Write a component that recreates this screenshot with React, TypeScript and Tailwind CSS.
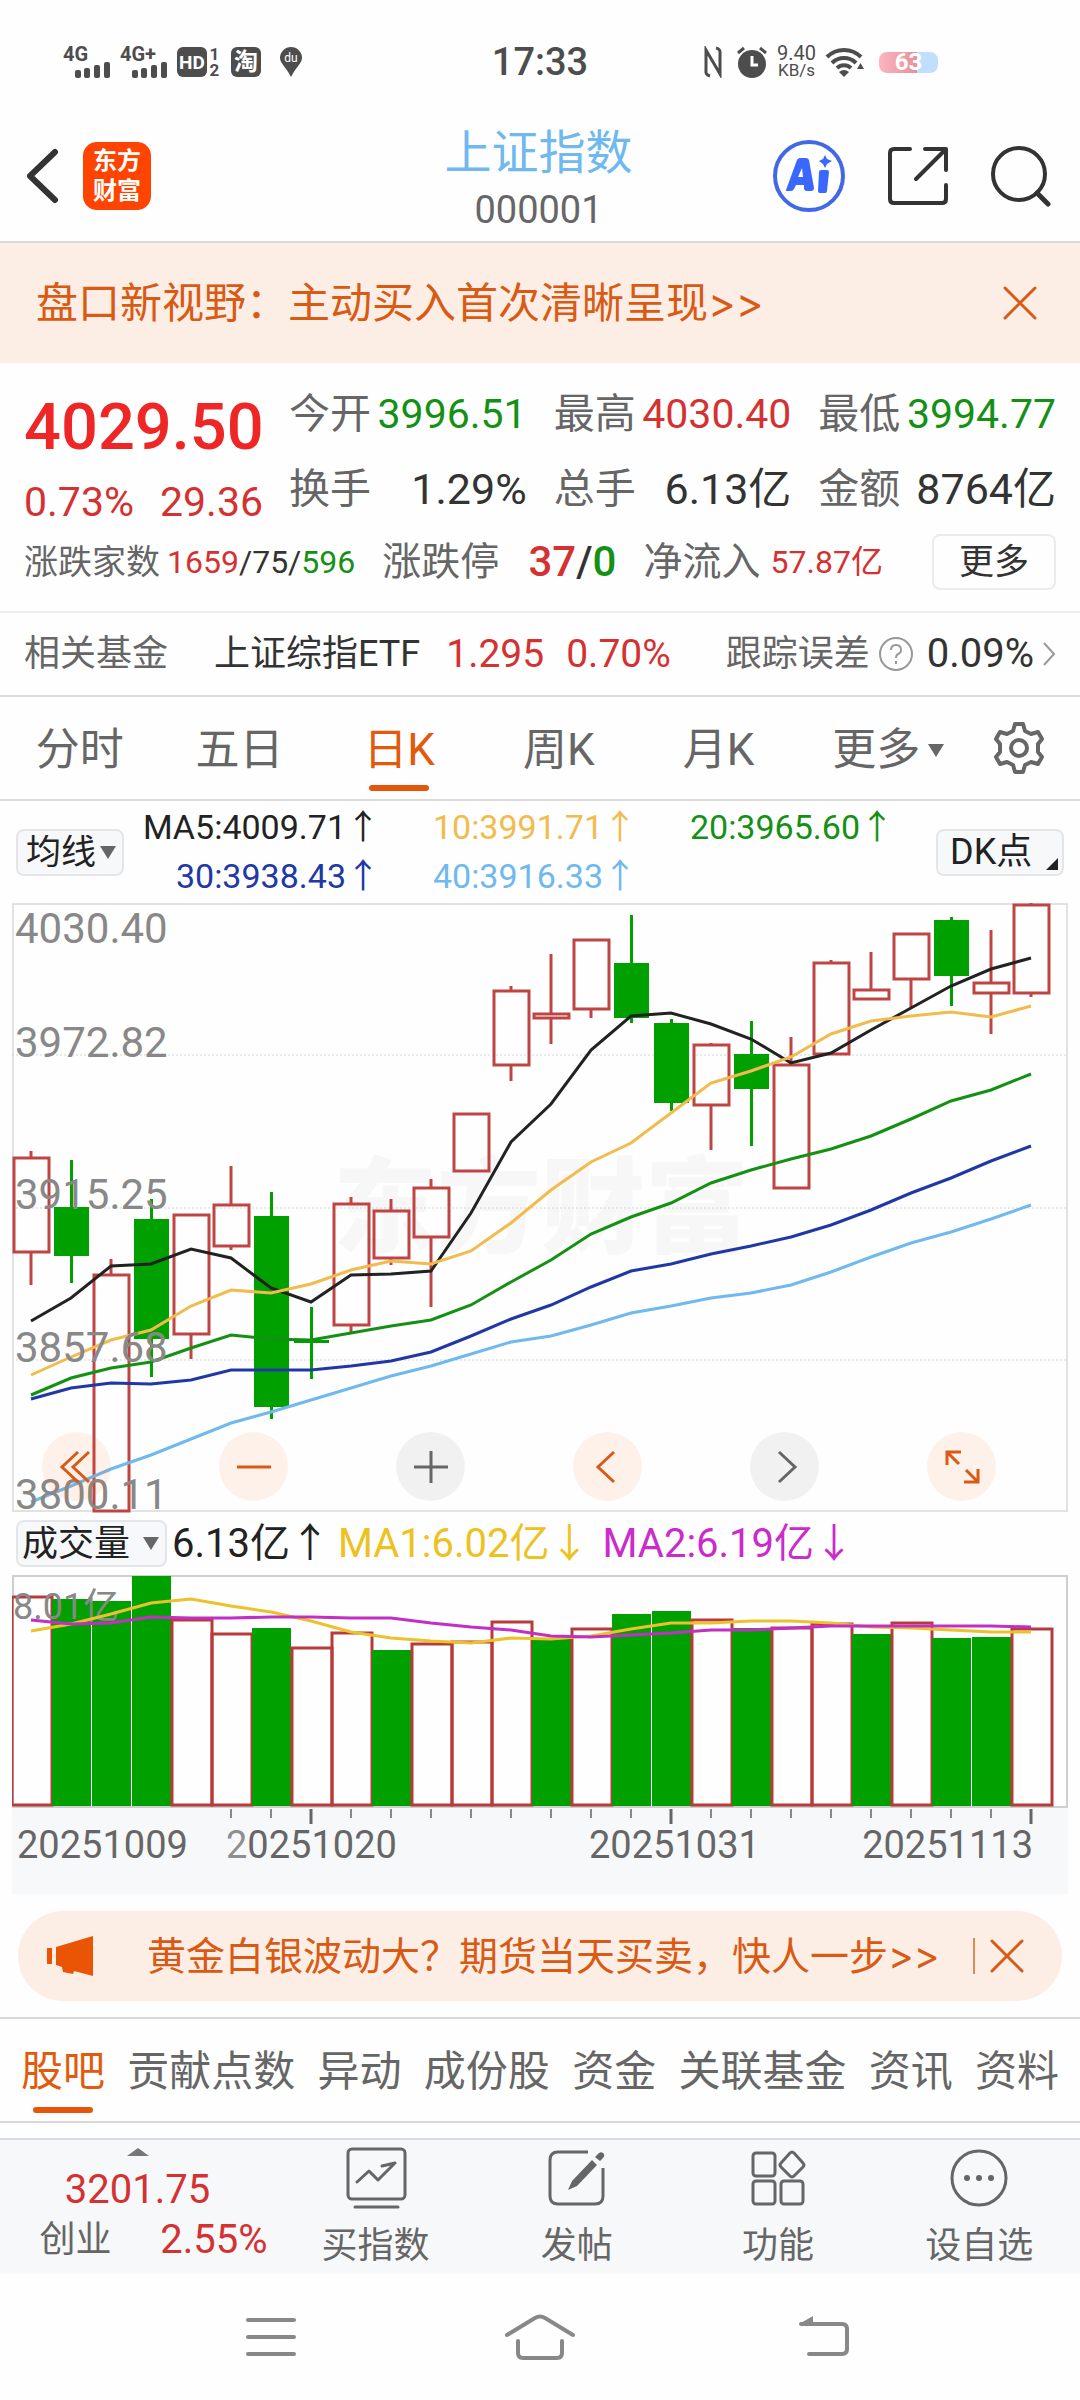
import { useState } from "react";
import type { ReactNode } from "react";

type Candle = [high: number, top: number, bottom: number, low: number, up: boolean];

const CANDLES: Candle[] = [
  [248, 255, 349, 382, true],
  [257, 304, 353, 380, false],
  [356, 372, 608, 608, true],
  [296, 316, 436, 474, false],
  [312, 312, 431, 456, true],
  [263, 302, 343, 347, true],
  [289, 313, 504, 516, false],
  [404, 437, 440, 476, false],
  [294, 301, 422, 429, true],
  [296, 308, 355, 362, true],
  [276, 285, 334, 404, true],
  [211, 211, 268, 268, true],
  [83, 88, 162, 178, true],
  [51, 111, 115, 141, true],
  [37, 37, 106, 115, true],
  [12, 60, 115, 120, false],
  [116, 120, 200, 208, false],
  [140, 142, 202, 247, true],
  [118, 151, 186, 243, false],
  [134, 162, 285, 285, true],
  [57, 60, 151, 151, true],
  [49, 87, 96, 96, true],
  [31, 31, 76, 105, true],
  [14, 17, 73, 103, false],
  [27, 80, 90, 131, true],
  [0, 2, 90, 94, true],
];

const AVERAGES = [
  { color: "#222222", y: [418, 395, 363, 361, 346, 355, 385, 399, 372, 371, 368, 310, 239, 201, 147, 113, 110, 121, 136, 160, 150, 127, 105, 83, 66, 55] },
  { color: "#f2bb4d", y: [472, 454, 437, 427, 403, 387, 390, 381, 367, 358, 361, 348, 320, 287, 259, 240, 210, 180, 168, 154, 131, 118, 113, 109, 114, 103] },
  { color: "#149114", y: [492, 475, 465, 459, 445, 432, 436, 437, 430, 423, 417, 402, 379, 357, 331, 314, 300, 280, 267, 256, 246, 233, 216, 198, 187, 171] },
  { color: "#2038a5", y: [496, 485, 480, 481, 477, 467, 467, 467, 463, 458, 449, 433, 416, 402, 384, 368, 361, 351, 343, 334, 322, 307, 290, 275, 258, 243] },
  { color: "#6fb9ee", y: [599, 583, 566, 552, 536, 520, 509, 497, 485, 473, 463, 451, 439, 433, 422, 410, 403, 395, 390, 382, 369, 354, 340, 329, 316, 302] },
];

const VOLUME_TOPS = [22, 24, 26, 1, 45, 59, 53, 73, 58, 75, 69, 67, 47, 64, 54, 39, 36, 45, 53, 53, 49, 59, 48, 63, 62, 54];
const VOLUME_UP = [true, false, false, false, true, true, false, true, true, false, true, true, true, false, true, false, false, true, false, true, true, false, true, false, false, true];
const VOLUME_MA1 = [56, 49, 39, 28, 24, 31, 37, 46, 57, 63, 66, 68, 63, 64, 61, 54, 48, 48, 46, 46, 48, 52, 53, 55, 57, 57];
const VOLUME_MA2 = [45, 49, 48, 42, 43, 43, 42, 42, 43, 43, 48, 52, 55, 61, 62, 60, 58, 55, 55, 53, 51, 51, 51, 51, 51, 52];

const centre = (i: number) => 19 + 40 * i;
const line = (ys: number[]) => ys.map((y, i) => `${centre(i)},${y}`).join(" ");

function StatusBar() {
  return (
    <div className="grid h-24 grid-cols-[1fr_auto_1fr] items-center pt-7 text-[#4d4d4d]">
      <div className="flex items-center pl-[63px]">
        <svg width="105" height="42" viewBox="0 -4 105 42" fill="currentColor" aria-label="4G 4G+">
          <text x="0" y="16" fontSize="20" fontWeight="700" fontFamily="Roboto">4G</text>
          <rect x="12" y="25" width="6" height="8" rx="2" />
          <rect x="21" y="23" width="6" height="10" rx="2" />
          <rect x="31" y="20" width="6" height="13" rx="2" />
          <rect x="41" y="17" width="6" height="16" rx="2" />
          <text x="57" y="16" fontSize="20" fontWeight="700" fontFamily="Roboto">4G+</text>
          <rect x="69" y="25" width="6" height="8" rx="2" />
          <rect x="78" y="23" width="6" height="10" rx="2" />
          <rect x="88" y="20" width="6" height="13" rx="2" />
          <rect x="98" y="17" width="6" height="16" rx="2" />
        </svg>
        <div className="ml-[9px] flex size-[30px] items-center justify-center rounded-md bg-[#4d4d4d] text-[19px] leading-none font-bold text-white">
          HD
        </div>
        <div className="ml-[2px] flex w-[11px] flex-col items-center text-[17px] leading-[16px] font-bold">
          <span>1</span>
          <span>2</span>
        </div>
        <div className="ml-[11px] flex size-[30px] items-center justify-center rounded-md bg-[#4d4d4d] text-[24px] leading-none font-bold text-white">
          淘
        </div>
        <svg className="ml-[18px]" width="24" height="32" viewBox="0 0 24 32">
          <path d="M12 1a11 11 0 0 1 11 11c0 5-6 9-11 19C7 21 1 17 1 12A11 11 0 0 1 12 1z" fill="#4d4d4d" />
          <text x="12" y="16" fontSize="12" textAnchor="middle" fill="#fff" fontFamily="Roboto">du</text>
        </svg>
      </div>
      <div className="text-[38px] leading-none font-medium">17:33</div>
      <div className="flex items-center justify-end pr-[142px]">
        <svg width="20" height="32" viewBox="0 0 20 32" fill="none" stroke="currentColor" strokeWidth="3">
          <path d="M7 30C2 29 3 26 3 22V4l14 24V10c0-4 1-7-4-8" />
        </svg>
        <svg className="ml-[13px]" width="32" height="32" viewBox="0 0 32 32">
          <circle cx="16" cy="18" r="14" fill="#4d4d4d" />
          <path d="M2 7l6-5M30 7l-6-5" stroke="#4d4d4d" strokeWidth="3" />
          <path d="M16 10v9h6" stroke="#fff" strokeWidth="3" fill="none" />
        </svg>
        <div className="ml-[9px] flex flex-col items-center">
          <span className="text-[20px] leading-[17px]">9.40</span>
          <span className="text-[17px] leading-[17px]">KB/s</span>
        </div>
        <svg className="ml-[9px]" width="40" height="30" viewBox="0 0 40 30" fill="none" stroke="currentColor" strokeWidth="4">
          <path d="M2 10a24 24 0 0 1 34 0M7 16a17 17 0 0 1 24 0M12 21a10 10 0 0 1 14 0" />
          <path d="M14 25l5 5 5-5q-5-4-10 0z" fill="currentColor" stroke="none" />
          <path d="M32 22l3.500-6 3.500 6z" fill="currentColor" stroke="none" />
        </svg>
        <div className="ml-[14px] flex h-[21px] w-[59px] items-center justify-center rounded-[8px] bg-linear-to-r from-[#fcb5bf] from-0% via-[#e5909b] via-65% to-[#c0dffc] to-65% text-[24px] leading-none font-bold text-white">
          63
        </div>
      </div>
    </div>
  );
}

function Header() {
  return (
    <header className="flex items-center border-b-2 border-[#d9d9d9] pt-5 pr-[29px] pb-[5px] pl-[26px]">
      <div className="flex flex-1 items-center">
        <button aria-label="返回" className="text-[#333]">
          <svg width="34" height="60" viewBox="0 0 34 60" fill="none" stroke="currentColor" strokeWidth="6" strokeLinecap="round" strokeLinejoin="round">
            <path d="M29 6L4 30l25 24" />
          </svg>
        </button>
        <a href="#home" className="ml-[23px] flex size-[68px] flex-col items-center justify-center rounded-[14px] bg-[#ff4400] text-[24px] leading-[30px] font-bold text-white">
          <span>东方</span>
          <span>财富</span>
        </a>
      </div>
      <div className="flex flex-col items-center pt-[6px]">
        <h1 className="text-[47px] leading-[62px] text-[#6fb9f0]">上证指数</h1>
        <p className="text-[38px] leading-[52px] text-[#666]">000001</p>
      </div>
      <div className="flex flex-1 items-center justify-end gap-[42px] text-[#333]">
        <button aria-label="Ai">
          <svg width="74" height="74" viewBox="0 0 74 74">
            <circle cx="37" cy="37" r="34" fill="#fff" stroke="#4169e6" strokeWidth="4" />
            <path d="M14 51L25 21q1-2 3-2h6q2 0 3 2l5 28q0 3-3 3h-4q-3 0-3-3v-3h-8l-2 4q-1 2-3 2h-4q-2 0-1-1zM26 38h5l-1-9z" fill="#3a68ff" fillRule="evenodd" />
            <path d="M49 31h6q2 0 2 2l-2 19q0 2-2 2h-5q-2 0-2-2l1-19q0-2 2-2zM53 16l2 4 5 2-5 3-2 4-2-4-4-3 4-2z" fill="#3a68ff" />
          </svg>
        </button>
        <button aria-label="分享">
          <svg width="60" height="60" viewBox="0 0 60 60" fill="none" stroke="currentColor" strokeWidth="4" strokeLinecap="round" strokeLinejoin="round">
            <path d="M22 3H6q-4 0-4 4v46q0 4 4 4h48q4 0 4-4V39M37 3h21v21M57 4L28 33" />
          </svg>
        </button>
        <button aria-label="搜索">
          <svg width="61" height="62" viewBox="0 0 61 62" fill="none" stroke="currentColor" strokeWidth="4" strokeLinecap="round">
            <circle cx="29" cy="29" r="26" />
            <path d="M47 48l11 11" strokeWidth="5" />
          </svg>
        </button>
      </div>
    </header>
  );
}

function Cross() {
  return (
    <svg width="34" height="34" viewBox="0 0 34 34" stroke="currentColor" strokeWidth="3" strokeLinecap="round">
      <path d="M2 2l30 30M32 2L2 32" />
    </svg>
  );
}

function Stat({ label, value, tone }: { label: string; value: string; tone: string }) {
  return (
    <div className="flex h-[75px] items-center justify-between leading-none">
      <dt className="text-[41px] text-[#666]">{label}</dt>
      <dd className={tone}>{value}</dd>
    </div>
  );
}

function Quote() {
  const green = "text-[#149114]";
  const red = "text-[#d43232]";
  return (
    <section className="border-b-2 border-[#ededed] px-6 py-[14px]">
      <div className="flex gap-[26px]">
        <div className="w-[239px]">
          <div className="flex h-[100px] items-center text-[65px] leading-none font-medium text-[#ee2626]">4029.50</div>
          <div className="flex h-[50px] items-center justify-between text-[41px] leading-none text-[#d43232]">
            <span>0.73%</span>
            <span>29.36</span>
          </div>
        </div>
        <dl className="grid flex-1 grid-cols-3 gap-x-[27px]">
          <Stat label="今开" value="3996.51" tone="text-[41px] text-[#149114]" />
          <Stat label="最高" value="4030.40" tone="text-[41px] text-[#d43232]" />
          <Stat label="最低" value="3994.77" tone="text-[41px] text-[#149114]" />
          <Stat label="换手" value="1.29%" tone="text-[43px] text-[#333]" />
          <Stat label="总手" value="6.13亿" tone="text-[43px] text-[#333]" />
          <Stat label="金额" value="8764亿" tone="text-[43px] text-[#333]" />
        </dl>
      </div>
      <div className="flex h-[70px] items-center justify-between leading-none whitespace-nowrap text-[#666]">
        <div className="flex items-center gap-[7px]">
          <span className="text-[34px]">涨跌家数</span>
          <span className="text-[32px] text-[#333]">
            <span className={red}>1659</span>/75/<span className={green}>596</span>
          </span>
        </div>
        <div className="flex items-center gap-[29px]">
          <span className="text-[39px]">涨跌停</span>
          <span className="text-[42px] font-medium text-[#333]">
            <span className={red}>37</span>/<span className={green}>0</span>
          </span>
        </div>
        <div className="flex items-center gap-[10px]">
          <span className="text-[39px]">净流入</span>
          <span className="text-[32px] text-[#d43232]">57.87亿</span>
        </div>
        <button className="ml-[22px] flex h-[56px] w-[124px] items-center justify-center rounded-lg border-2 border-[#ebebeb] text-[35px] text-[#333]">
          更多
        </button>
      </div>
    </section>
  );
}

function FundRow() {
  return (
    <a href="#fund" className="flex h-[84px] items-center border-b-2 border-[#dadada] px-6 text-[36px] leading-none whitespace-nowrap text-[#666]">
      <span>相关基金</span>
      <span className="ml-[46px] text-[#333]">上证综指ETF</span>
      <span className="ml-[26px] text-[39px] text-[#d43232]">1.295</span>
      <span className="ml-[22px] text-[39px] text-[#d43232]">0.70%</span>
      <span className="ml-auto">跟踪误差</span>
      <svg className="ml-[8px]" width="36" height="36" viewBox="0 0 36 36" fill="none" stroke="#999" strokeWidth="2">
        <circle cx="18" cy="18" r="16" />
        <path d="M13 14q0-5 5-5t5 5q0 3-3 4-2 1-2 4M18 25v3" />
      </svg>
      <span className="ml-[13px] text-[40px] text-[#333]">0.09%</span>
      <svg className="ml-[8px]" width="14" height="26" viewBox="0 0 14 26" fill="none" stroke="#999" strokeWidth="2">
        <path d="M2 2l10 11L2 24" />
      </svg>
    </a>
  );
}

function Triangle({ className }: { className: string }) {
  return (
    <svg className={className} width="16" height="13" viewBox="0 0 16 13">
      <path d="M0 0h16L8 13z" fill="#666" />
    </svg>
  );
}

function PeriodTabs() {
  const [active, setActive] = useState("日K");
  return (
    <nav className="flex h-[104px] items-stretch border-b-2 border-[#dadada] text-[44px] leading-none text-[#666]">
      {["分时", "五日", "日K", "周K", "月K"].map((tab) => (
        <button
          key={tab}
          onClick={() => setActive(tab)}
          className={`relative flex flex-1 items-center justify-center pt-1 ${tab === active ? "text-[#e25a0c]" : ""}`}
        >
          {tab}
          {tab === active && <span className="absolute bottom-[8px] h-[6px] w-[60px] rounded-full bg-[#e6560a]" />}
        </button>
      ))}
      <button className="flex flex-1 items-center justify-center pt-1">
        <span className="flex items-center gap-2 pl-5">
          更多
          <Triangle className="shrink-0" />
        </span>
      </button>
      <button aria-label="设置" className="flex w-[122px] items-center justify-center">
        <svg width="52" height="52" viewBox="0 0 52 52" fill="none" stroke="currentColor" strokeWidth="4" strokeLinejoin="round">
          <path d="M22 2h8l2 7 6 3 7-2 4 7-4 5v8l4 5-4 7-7-2-6 3-2 7h-8l-2-7-6-3-7 2-4-7 4-5v-8l-4-5 4-7 7 2 6-3z" />
          <circle cx="26" cy="26" r="8" />
        </svg>
      </button>
    </nav>
  );
}

function Legend() {
  return (
    <div className="flex h-[102px] items-center justify-between px-4">
      <div className="relative">
        <select aria-label="指标" className="h-[47px] w-[108px] appearance-none rounded-lg border-2 border-[#e3e5e9] bg-[#f7f8fa] pl-2 text-[35px] leading-none text-[#222]">
          <option>均线</option>
        </select>
        <Triangle className="pointer-events-none absolute top-[17px] right-[8px]" />
      </div>
      <div className="grid flex-1 grid-cols-[256px_257px_257px] text-right text-[34px] leading-[49px] whitespace-nowrap">
        <span className="text-[#222]">MA5:4009.71↑</span>
        <span className="text-[#f2bb4d]">10:3991.71↑</span>
        <span className="text-[#149114]">20:3965.60↑</span>
        <span className="text-[#2038a5]">30:3938.43↑</span>
        <span className="text-[#6fb9ee]">40:3916.33↑</span>
      </div>
      <button className="relative flex h-[47px] w-[128px] items-center rounded-lg border-2 border-[#e3e5e9] bg-[#f7f8fa] pl-3 text-[36px] leading-none text-[#222]">
        DK点
        <svg className="absolute right-1 bottom-[4px]" width="12" height="12" viewBox="0 0 12 12">
          <path d="M12 0v12H0z" fill="#222" />
        </svg>
      </button>
    </div>
  );
}

function RoundButton({ label, warm, children }: { label: string; warm: boolean; children: ReactNode }) {
  return (
    <button
      aria-label={label}
      className={`flex size-[69px] items-center justify-center rounded-full ${warm ? "bg-[#ff5500]/8 text-[#d95a14]" : "bg-black/5 text-[#666]"}`}
    >
      <svg width="40" height="40" viewBox="0 0 40 40" fill="none" stroke="currentColor" strokeWidth="3">
        {children}
      </svg>
    </button>
  );
}

function PriceChart() {
  const labels: [string, number][] = [
    ["4030.40", 40],
    ["3972.82", 154],
    ["3915.25", 306],
    ["3857.68", 459],
    ["3800.11", 606],
  ];
  return (
    <div className="relative mx-3">
      <svg className="block h-auto w-full overflow-visible" viewBox="0 0 1056 609" fontFamily="Roboto, 'Noto Sans CJK SC', sans-serif">
        <text x="321" y="342" fontSize="104" fontWeight="900" fill="#f7f7f7">东方财富</text>
        <rect x="1" y="1" width="1054" height="607" fill="none" stroke="#e2e2e2" strokeWidth="2" />
        {[152, 305, 457].map((y) => (
          <path key={y} d={`M0 ${y}H1056`} stroke="#d4d4d4" strokeWidth="1" strokeDasharray="2 2" />
        ))}
        {CANDLES.map(([high, top, bottom, low, up], i) => {
          const x = centre(i);
          return up ? (
            <g key={i} stroke="#bf4444" strokeWidth="3" fill="none">
              <path d={`M${x} ${high}V${top}M${x} ${bottom}V${low}`} />
              <rect x={x - 17} y={top} width="35" height={bottom - top} />
            </g>
          ) : (
            <g key={i} fill="#00a000">
              <rect x={x - 1} y={high} width="3" height={low - high} />
              <rect x={x - 17} y={top} width="35" height={bottom - top} />
            </g>
          );
        })}
        {AVERAGES.map(({ color, y }) => (
          <polyline key={color} points={line(y)} fill="none" stroke={color} strokeWidth="3" />
        ))}
        {labels.map(([text, y]) => (
          <text key={text} x="3" y={y} fontSize="42" fill="#888888">{text}</text>
        ))}
      </svg>
      <div className="absolute inset-x-0 bottom-[11px] flex justify-between pr-[72px] pl-[30px]">
        <RoundButton label="最早" warm>
          <path d="M21 5L5 20l16 15M32 5L16 20l16 15" />
        </RoundButton>
        <RoundButton label="缩小" warm>
          <path d="M3 20h34" />
        </RoundButton>
        <RoundButton label="放大" warm={false}>
          <path d="M3 20h34M20 4v32" />
        </RoundButton>
        <RoundButton label="向左" warm>
          <path d="M26 5L10 20l16 15" />
        </RoundButton>
        <RoundButton label="向右" warm={false}>
          <path d="M14 5l16 15-16 15" />
        </RoundButton>
        <RoundButton label="全屏" warm>
          <path d="M5 18V5h14M5 5l12 12M36 22v13H22M36 35L24 23" />
        </RoundButton>
      </div>
    </div>
  );
}

function VolumeHeader() {
  return (
    <div className="flex h-[63px] items-center pl-4 text-[40px] leading-none whitespace-nowrap">
      <div className="relative">
        <select aria-label="副图指标" className="h-[47px] w-[151px] appearance-none rounded-lg border-2 border-[#e3e5e9] bg-[#f7f8fa] pl-1 text-[36px] leading-none text-[#222]">
          <option>成交量</option>
        </select>
        <Triangle className="pointer-events-none absolute top-[17px] right-[8px]" />
      </div>
      <span className="ml-[5px] text-[#222]">6.13亿↑</span>
      <span className="ml-[8px] text-[#edc21f]">MA1:6.02亿↓</span>
      <span className="ml-[13px] text-[#ca2bca]">MA2:6.19亿↓</span>
    </div>
  );
}

function VolumeChart() {
  return (
    <svg className="mx-3 block h-auto" viewBox="0 0 1056 319" fontFamily="Roboto, 'Noto Sans CJK SC', sans-serif">
      <rect x="0" y="232" width="1056" height="87" fill="#f7f8fa" />
      <rect x="1" y="1" width="1054" height="231" fill="none" stroke="#cfcfcf" strokeWidth="2" />
      {VOLUME_TOPS.map((top, i) =>
        VOLUME_UP[i] ? (
          <rect key={i} x={i * 40} y={top} width="40" height={230 - top} fill="none" stroke="#b73b3b" strokeWidth="3" />
        ) : (
          <rect key={i} x={i * 40} y={top} width="39" height={231 - top} fill="#00a000" />
        ),
      )}
      <text x="1" y="44" fontSize="36" fill="#888888">8.01亿</text>
      <polyline points={line(VOLUME_MA1)} fill="none" stroke="#ecc22c" strokeWidth="3" />
      <polyline points={line(VOLUME_MA2)} fill="none" stroke="#c22fc4" strokeWidth="3" />
      {VOLUME_TOPS.map((_, i) => {
        if (i < 5) return null;
        const major = i === 7 || i === 16 || i === 25;
        return <path key={i} d={`M${centre(i)} 234V${major ? 249 : 243}`} stroke={major ? "#666" : "#888"} strokeWidth={major ? 3 : 2} />;
      })}
      <g fontSize="38" fill="#666">
        <text x="5" y="283">20251009</text>
        <text x="214" y="283">
          <tspan fill="#8f8f8f">2</tspan>0251020
        </text>
        <text x="577" y="283">20251031</text>
        <text x="1021" y="283" textAnchor="end">20251113</text>
      </g>
    </svg>
  );
}

function Promo() {
  return (
    <div className="mx-[18px] mt-[17px] mb-4 flex h-[90px] items-center rounded-full bg-[#fceee5] pr-[38px] pl-[29px] text-[39px] leading-none whitespace-nowrap text-[#d95a14]">
      <svg width="48" height="42" viewBox="0 0 48 42" fill="#e95504">
        <path d="M0 13h5v16H0zM9 12L46 1v40l-19-5-1 3-10-2-1-5-6-2z" />
      </svg>
      <a href="#futures" className="ml-[52px]">
        黄金白银波动大？期货当天买卖，快人一步<span className="font-[Inter]">&gt;&gt;</span>
      </a>
      <span className="ml-auto h-[36px] w-[2px] bg-[#d98b5e]" />
      <button aria-label="关闭" className="ml-[15px]">
        <Cross />
      </button>
    </div>
  );
}

function SectionTabs() {
  const [active, setActive] = useState("股吧");
  return (
    <nav className="flex h-[106px] items-stretch justify-between border-y-2 border-[#d9d9d9] px-[21px] text-[42px] leading-none whitespace-nowrap text-[#666]">
      {["股吧", "贡献点数", "异动", "成份股", "资金", "关联基金", "资讯", "资料"].map((tab) => (
        <button
          key={tab}
          onClick={() => setActive(tab)}
          className={`relative flex items-center justify-center pt-1 ${tab === active ? "text-[#e25a0c]" : ""}`}
        >
          {tab}
          {tab === active && <span className="absolute bottom-[8px] h-[6px] w-[60px] rounded-full bg-[#e6560a]" />}
        </button>
      ))}
    </nav>
  );
}

function Action({ label, children }: { label: string; children: ReactNode }) {
  return (
    <button className="flex flex-1 flex-col items-center pt-[7px] text-[36px] leading-none">
      <svg width="64" height="62" viewBox="0 0 64 62" fill="none" stroke="currentColor" strokeWidth="3" strokeLinejoin="round">
        {children}
      </svg>
      <span className="mt-[19px]">{label}</span>
    </button>
  );
}

function ActionBar() {
  return (
    <div className="mt-[15px] flex h-[136px] border-t-2 border-[#d9dbde] bg-[#f7f8fa] text-[#666]">
      <button className="flex w-[275px] flex-col items-center pt-[8px] leading-none">
        <svg width="22" height="8" viewBox="0 0 22 8">
          <path d="M11 0l11 8H0z" fill="#777" />
        </svg>
        <span className="mt-[14px] text-[40px] text-[#d43232]">3201.75</span>
        <span className="mt-[10px] ml-8 flex w-[228px] items-center justify-between text-[40px] text-[#d43232]">
          <span className="text-[36px] text-[#666]">创业</span>
          2.55%
        </span>
      </button>
      <Action label="买指数">
        <rect x="4" y="2" width="57" height="50" rx="4" />
        <path d="M13 35l12-11 9 9 16-16M38 19l13-3M11 60h43" strokeLinecap="round" />
      </Action>
      <Action label="发帖">
        <path d="M43 5H13q-8 0-8 8v36q0 8 8 8h37q8 0 8-8V21" />
        <path d="M47 13l5 5-20 21-9 4 4-9zM50 10l4-4q3-2 5 1 1 2-1 4l-3 3z" fill="currentColor" stroke="none" />
      </Action>
      <Action label="功能">
        <rect x="7" y="6" width="22" height="23" rx="3" />
        <rect x="7" y="34" width="22" height="23" rx="3" />
        <rect x="35" y="34" width="22" height="23" rx="3" />
        <path d="M44 6q2-2 4 0l9 10q2 2 0 4l-9 9q-2 2-4 0l-9-9q-2-2 0-4z" />
      </Action>
      <Action label="设自选">
        <circle cx="32" cy="31" r="27" />
        <g fill="currentColor" stroke="none">
          <circle cx="20" cy="31" r="3" />
          <circle cx="32" cy="31" r="3" />
          <circle cx="44" cy="31" r="3" />
        </g>
      </Action>
    </div>
  );
}

function SystemNav() {
  return (
    <nav className="flex h-[126px] items-center pr-[229px] pl-[244px] text-[#888]">
      <div className="flex flex-1">
        <button aria-label="最近任务">
          <svg width="54" height="44" viewBox="0 0 54 44" stroke="currentColor" strokeWidth="4" strokeLinecap="round">
            <path d="M4 5h46M4 22h46M4 39h46" />
          </svg>
        </button>
      </div>
      <button aria-label="主屏幕" className="mr-4">
        <svg width="72" height="46" viewBox="0 0 72 46" fill="none" stroke="currentColor" strokeWidth="4" strokeLinecap="round">
          <path d="M3 21L31 4q5-3 10 0l28 17M14 27v12q0 5 5 5h34q5 0 5-5V27" />
        </svg>
      </button>
      <div className="flex flex-1 justify-end">
        <button aria-label="返回上一级">
          <svg width="54" height="44" viewBox="0 0 54 44" fill="none" stroke="currentColor" strokeWidth="4" strokeLinecap="round">
            <path d="M4 9h41q5 0 5 5v20q0 5-5 5H12" />
            <path d="M2 9l14-8v8z" fill="currentColor" stroke="none" />
          </svg>
        </button>
      </div>
    </nav>
  );
}

export default function App() {
  return (
    <div className="min-h-screen bg-[#fefefe] font-[Roboto,'Noto_Sans_CJK_SC',sans-serif]">
      <StatusBar />
      <Header />
      <div className="flex h-[120px] items-center justify-between bg-[#fceee5] pr-[43px] pl-9 text-[42px] leading-none text-[#d95a14]">
        <a href="#news">
          盘口新视野：主动买入首次清晰呈现<span className="font-[Inter]">&gt;&gt;</span>
        </a>
        <button aria-label="关闭公告">
          <Cross />
        </button>
      </div>
      <Quote />
      <FundRow />
      <PeriodTabs />
      <Legend />
      <PriceChart />
      <VolumeHeader />
      <VolumeChart />
      <Promo />
      <SectionTabs />
      <ActionBar />
      <SystemNav />
    </div>
  );
}
